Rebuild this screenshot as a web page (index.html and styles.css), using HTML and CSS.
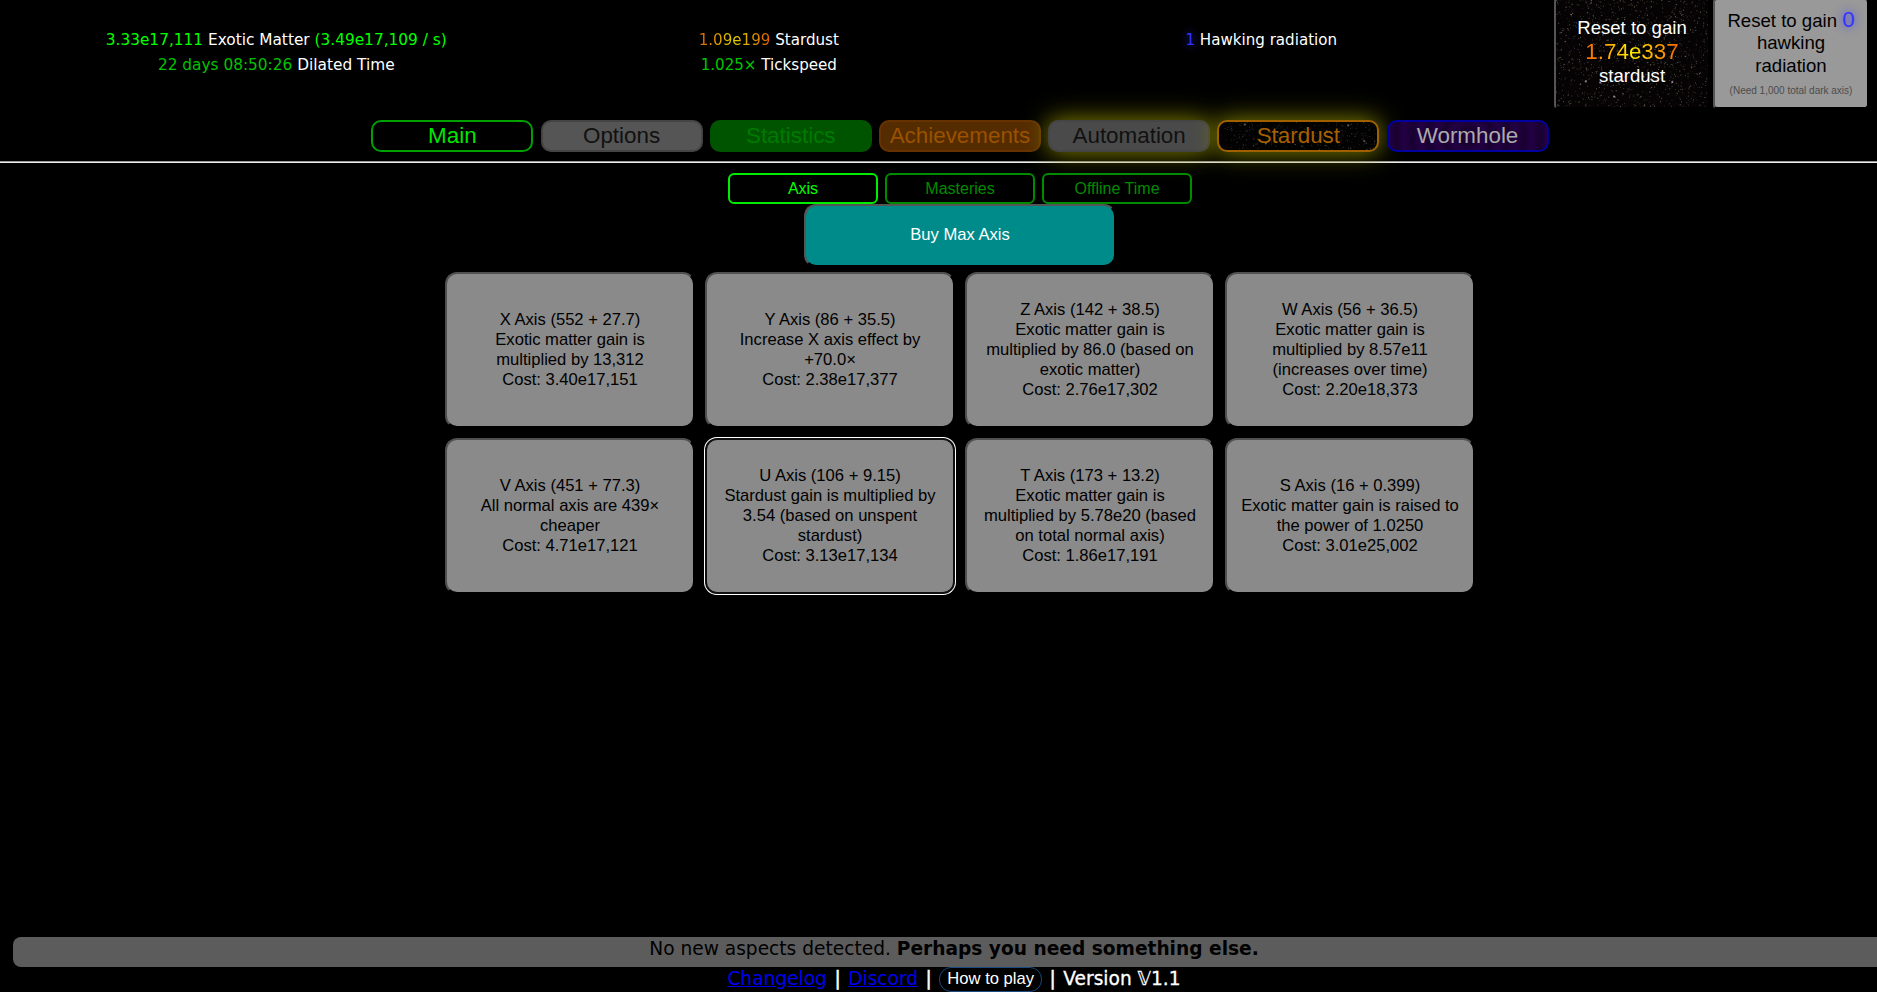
FILE: index.html
```html
<!DOCTYPE html>
<html lang="en">

<head>
    <meta charset="UTF-8">
    <meta name="viewport" content="width=device-width, initial-scale=1.0">
    <title>Exotic Matter Dimensions</title>
    <link rel="stylesheet" href="styles.css">
</head>

<body>
    <div class="header">
        <div class="stats">
            <div class="stat wide">
                <div><span class="exotic">3.33e17,111</span> Exotic Matter <span class="exotic">(3.49e17,109 / s)</span></div>
                <div><span class="time">22 days 08:50:26</span> Dilated Time</div>
            </div>
            <div class="stat">
                <div><span class="stardustText">1.09e199</span> Stardust</div>
                <div><span class="time">1.025×</span> Tickspeed</div>
            </div>
            <div class="stat">
                <div><span class="hawkingText">1</span> Hawking radiation</div>
            </div>
        </div>
        <button class="reset stardustReset">
            <svg class="stars" data-count="1300" data-seed="7" width="154" height="110"></svg>
            <span class="label">Reset to gain<br><span class="amount">1.74e337</span><br>stardust</span>
        </button>
        <button class="reset hawkingReset">
            <span class="label">Reset to gain <span class="amount">0</span><br>hawking<br>radiation</span>
            <span class="need">(Need 1,000 total dark axis)</span>
        </button>
    </div>

    <div class="tabs">
        <button class="tab main">Main</button>
        <button class="tab options">Options</button>
        <button class="tab statistics">Statistics</button>
        <button class="tab achievements">Achievements</button>
        <button class="tab automation">Automation</button>
        <button class="tab stardust">
            <svg class="stars dim" data-count="420" data-seed="23" width="162" height="32"></svg>
            <span class="label">Stardust</span>
        </button>
        <button class="tab wormhole">Wormhole</button>
    </div>
    <div class="line"></div>

    <div class="content">
        <div class="subtabs">
            <button class="subtab active">Axis</button>
            <button class="subtab">Masteries</button>
            <button class="subtab">Offline Time</button>
        </div>
        <button class="buyMax">Buy Max Axis</button>
        <div class="axes">
            <button class="axis">X Axis (552 + 27.7)<br>Exotic matter gain is<br>multiplied by 13,312<br>Cost: 3.40e17,151</button>
            <button class="axis">Y Axis (86 + 35.5)<br>Increase X axis effect by<br>+70.0×<br>Cost: 2.38e17,377</button>
            <button class="axis">Z Axis (142 + 38.5)<br>Exotic matter gain is<br>multiplied by 86.0 (based on<br>exotic matter)<br>Cost: 2.76e17,302</button>
            <button class="axis">W Axis (56 + 36.5)<br>Exotic matter gain is<br>multiplied by 8.57e11<br>(increases over time)<br>Cost: 2.20e18,373</button>
            <button class="axis">V Axis (451 + 77.3)<br>All normal axis are 439×<br>cheaper<br>Cost: 4.71e17,121</button>
            <button class="axis focused">U Axis (106 + 9.15)<br>Stardust gain is multiplied by<br>3.54 (based on unspent<br>stardust)<br>Cost: 3.13e17,134</button>
            <button class="axis">T Axis (173 + 13.2)<br>Exotic matter gain is<br>multiplied by 5.78e20 (based<br>on total normal axis)<br>Cost: 1.86e17,191</button>
            <button class="axis">S Axis (16 + 0.399)<br>Exotic matter gain is raised to<br>the power of 1.0250<br>Cost: 3.01e25,002</button>
        </div>
    </div>

    <div class="footer">
        <div class="news">No new aspects detected. <b>Perhaps you need something else.</b></div>
        <div class="links">
            <a href="#">Changelog</a>
            <span class="bar">|</span>
            <a href="#">Discord</a>
            <span class="bar">|</span>
            <button class="howTo">How to play</button>
            <span class="bar">|</span>
            <span class="version">Version 𝕍1.1</span>
        </div>
    </div>

    <script src="script.js"></script>
</body>

</html>
```

FILE: styles.css
```css
* {
    box-sizing: border-box;
}

body {
    height: 992px;
    margin: 0;
    overflow: hidden;
    background: black;
    color: white;
    font-family: Verdana, "DejaVu Sans", sans-serif;
    display: flex;
    flex-direction: column;
}

button {
    margin: 0;
    padding: 0;
    font-family: "Liberation Sans", Arial, sans-serif;
}

.header {
    display: flex;
    flex: none;
    height: 120px;
    padding-left: 30px;
}

.stats {
    display: flex;
    width: 1524px;
    padding-top: 28px;
    font-size: 15.1px;
    line-height: 25px;
}

.stat {
    width: 492.5px;
    text-align: center;
}

.stat.wide {
    font-size: 15.35px;
}

.exotic {
    color: #00ff00;
}

.time {
    color: #00c400;
}

.stardustText,
.stardustReset .amount {
    background: linear-gradient(90deg, #ff6600, #ffee00, #ff6600);
    -webkit-background-clip: text;
    -webkit-text-fill-color: transparent;
}

.stardustText {
    background-image: linear-gradient(90deg, #e06000, #e0d000 50%, #e06000);
}

.hawkingText {
    color: #3333ff;
    text-shadow: 0 0 10px #3333ff;
}

.reset {
    width: 156px;
    height: 111px;
    margin: -2px 3px 0 0;
    border: 2px outset black;
    border-color: #555 black black #555;
    border-radius: 4px;
    font-size: 18.6px;
    position: relative;
    overflow: hidden;
}

.label {
    position: relative;
}

.stardustReset {
    padding-bottom: 3px;
    background: #050303;
    color: white;
    line-height: 23.5px;
}

.stardustReset .amount {
    font-size: 22.4px;
}

.hawkingReset {
    padding-top: 1px;
    background: #999;
    color: black;
    line-height: 22.5px;
}

.hawkingReset .amount {
    color: #3333ff;
    font-size: 22.4px;
    text-shadow: 0 0 10px #3333ff;
}

.need {
    display: block;
    margin-top: 5px;
    font-size: 10px;
    line-height: 17px;
    color: #4c4c4c;
}

.stars {
    position: absolute;
    top: 0;
    left: 0;
}

.dim {
    opacity: 0.65;
}

.tabs {
    display: flex;
    flex: none;
    gap: 7.2px;
    height: 41px;
    padding-left: 371.4px;
}

.tab {
    width: 162px;
    height: 32px;
    border: 2px solid;
    border-radius: 10px;
    font-size: 22.4px;
    line-height: 26px;
    position: relative;
}

.main {
    background: black;
    border-color: #00a000;
    color: #00e600;
}

.options {
    background: #555;
    border-color: #444;
    color: #111;
}

.statistics {
    background: #005400;
    border-color: #005400;
    color: #007a00;
}

.achievements {
    background: #552b00;
    border-color: #663300;
    color: #995200;
}

.automation {
    background: #4a4a4a;
    border-color: #444;
    color: #111;
    box-shadow: 0 0 24px 1px #808000;
}

.stardust {
    background: #030202;
    border-color: #a06000;
    color: #a86000;
    box-shadow: 0 0 24px 1px #808000;
}

.stardust .stars {
    width: 158px;
    height: 28px;
    border-radius: 8px;
}

.wormhole {
    background: repeating-radial-gradient(circle, #240044 0, #180030 8px, #240044 16px);
    border-color: #0000a0;
    color: #aaa;
}

.line {
    flex: none;
    height: 2px;
    border-top: 1px solid #9a9a9a;
    border-bottom: 1px solid #eee;
}

.content {
    flex: 1;
    width: 1030px;
    margin-left: 445px;
    padding-top: 10px;
    display: flex;
    flex-direction: column;
    align-items: center;
}

.subtabs {
    display: flex;
    gap: 7px;
}

.subtab {
    width: 150px;
    height: 31px;
    background: black;
    border: 2px solid #008c00;
    border-radius: 6px;
    color: #008c00;
    font-size: 16px;
}

.subtab.active {
    border-color: #00ec00;
    color: #00ff00;
}

.buyMax {
    width: 312px;
    height: 63px;
    padding-bottom: 2px;
    background: #008b8b;
    border: 2px solid;
    border-color: #555 black black #555;
    border-radius: 12px;
    color: white;
    font-size: 16.6px;
}

.axes {
    display: grid;
    grid-template-columns: repeat(4, 250px);
    gap: 10px;
    margin-top: 5px;
}

.axis {
    height: 156px;
    background: #8a8a8a;
    border: 2px solid;
    border-color: #505050 black black #505050;
    border-radius: 12px;
    color: black;
    font-size: 16.6px;
    line-height: 20px;
    white-space: nowrap;
}

.axis.focused {
    border-color: #101010;
    box-shadow: 0 0 0 1px white;
}

.footer {
    flex: none;
    width: 1882px;
    height: 55px;
    margin-left: 13px;
    text-align: center;
}

.news {
    height: 30px;
    background: #5c5c5c;
    border-radius: 8px;
    color: black;
    font-size: 18.6px;
    line-height: 24px;
}

.links {
    display: flex;
    justify-content: center;
    gap: 7.5px;
    height: 25px;
    font-size: 18.6px;
    line-height: 24px;
}

.links a {
    color: #0000ee;
}

.bar {
    -webkit-text-stroke: 0.5px white;
}

.version {
    -webkit-text-stroke: 0.3px white;
}

.howTo {
    height: 25px;
    padding: 0 7px 2px;
    background: black;
    border: 1px solid #1a4a80;
    border-radius: 12px;
    color: white;
    font-size: 16.6px;
}
```

FILE: script.js
```javascript
// scatter stars over the stardust backgrounds
document.querySelectorAll('.stars').forEach((svg) => {
    let seed = Number(svg.dataset.seed);
    const rand = () => {
        seed = (seed * 16807) % 2147483647;
        return seed / 2147483647;
    };
    for (let i = 0; i < 20; i++) rand();

    const w = svg.getAttribute('width');
    const h = svg.getAttribute('height');
    const colors = ['#8a7a60', '#6d7a58', '#7d6a86', '#a09080'];

    for (let i = 0; i < svg.dataset.count; i++) {
        const star = document.createElementNS('http://www.w3.org/2000/svg', 'circle');
        const bright = rand() > 0.993;
        star.setAttribute('cx', (rand() * w).toFixed(1));
        star.setAttribute('cy', (rand() * h).toFixed(1));
        star.setAttribute('r', bright ? 1.1 : 0.4 + rand() * 0.25);
        star.setAttribute('fill', bright ? '#b8a0b0' : colors[Math.floor(rand() * 4)]);
        star.setAttribute('opacity', bright ? 0.8 : (0.2 + rand() * 0.6).toFixed(2));
        svg.appendChild(star);
    }
});
```
